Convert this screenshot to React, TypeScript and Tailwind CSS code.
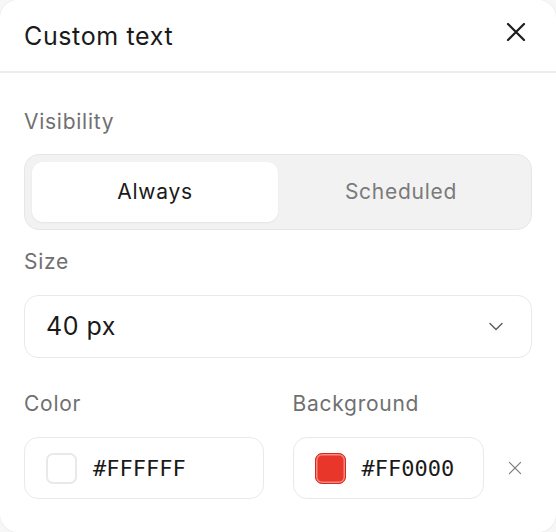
import { useState } from 'react';

const font = { fontFamily: 'Inter, "Noto Sans", sans-serif' };

const CloseIcon = ({ size, stroke }: { size: number; stroke: number }) => (
  <svg width={size} height={size} viewBox="0 0 20 20" fill="none">
    <path d="M2 2L18 18M18 2L2 18" stroke="currentColor" strokeWidth={stroke} strokeLinecap="round" />
  </svg>
);

const ColorField = ({ value, swatch }: { value: string; swatch: 'white' | 'red' }) => (
  <div className="flex h-[62px] flex-1 items-center gap-4 rounded-[14px] border-[1.5px] border-[#e9e9e9] bg-white pl-[21px]">
    {swatch === 'white' ? (
      <div className="h-[31px] w-[31px] rounded-[7px] border-2 border-[#e9e9e9] bg-white" />
    ) : (
      <div className="h-[31px] w-[31px] rounded-[7px] border border-[#d42a1d] bg-[#e8362a] shadow-[inset_0_0_0_1.5px_#f48a80]" />
    )}
    <span className="text-[22px] text-[#1a1a1a]" style={{ fontFamily: '"DejaVu Sans Mono", monospace' }}>
      {value}
    </span>
  </div>
);

const label = 'text-[21px] leading-7 tracking-[0.035em] text-[#707070]';

const App = () => {
  const [visibility, setVisibility] = useState<'always' | 'scheduled'>('always');

  return (
    <div className="h-[532px] w-[556px] bg-[#f7f7f7]" style={font}>
      <div className="h-full rounded-[18px] bg-white shadow-[0_0_0_1px_#efefef]">
        <div className="flex h-[73px] items-center justify-between border-b-2 border-[#ececec] pl-6 pr-[30px]">
          <h1 className="text-[25px] leading-8 tracking-[0.025em] text-[#1a1a1a]">Custom text</h1>
          <button className="mb-2 text-[#1c1c1c]">
            <CloseIcon size={20} stroke={2.2} />
          </button>
        </div>

        <div className="px-6 pt-[35px]">
          <p className={label}>Visibility</p>
          <div className="mt-[18px] grid h-[76px] grid-cols-2 rounded-[15px] border border-[#e6e6e6] bg-[#f2f2f2] p-[7px]">
            {(['always', 'scheduled'] as const).map((v) => (
              <button
                key={v}
                onClick={() => setVisibility(v)}
                className={
                  visibility === v
                    ? 'rounded-[11px] bg-white text-[21px] tracking-[0.035em] text-[#1a1a1a] shadow-[0_1px_2px_rgba(0,0,0,0.06)]'
                    : 'rounded-[11px] text-[21px] tracking-[0.035em] text-[#7a7a7a]'
                }
              >
                {v === 'always' ? 'Always' : 'Scheduled'}
              </button>
            ))}
          </div>

          <p className={`mt-[18px] ${label}`}>Size</p>
          <div className="mt-[19px] flex h-[63px] items-center justify-between rounded-[14px] border-[1.5px] border-[#e9e9e9] pl-[21px] pr-[27px]">
            <span className="text-[25px] tracking-[0.02em] text-[#1a1a1a]">40 px</span>
            <svg width="16" height="9" viewBox="0 0 16 9" fill="none" className="text-[#5a5a5a]">
              <path d="M2 1.5L8 7.5L14 1.5" stroke="currentColor" strokeWidth="1.4" strokeLinecap="round" strokeLinejoin="round" />
            </svg>
          </div>

          <div className="mt-[32px] grid grid-cols-2 gap-[29px]">
            <div>
              <p className={label}>Color</p>
              <div className="mt-[19px] flex">
                <ColorField value="#FFFFFF" swatch="white" />
              </div>
            </div>
            <div>
              <p className={label}>Background</p>
              <div className="mt-[19px] flex items-center">
                <ColorField value="#FF0000" swatch="red" />
                <button className="w-12 pl-6 text-[#777777]">
                  <CloseIcon size={14} stroke={1.6} />
                </button>
              </div>
            </div>
          </div>
        </div>
      </div>
    </div>
  );
};

export default App;
